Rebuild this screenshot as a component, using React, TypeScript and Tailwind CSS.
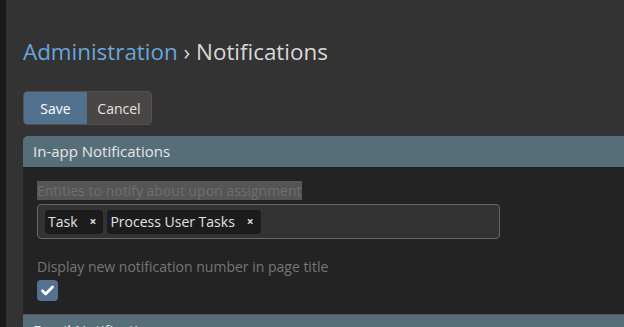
import React, { useState } from 'react';

const App = () => {
  const [tags, setTags] = useState(['Task', 'Process User Tasks']);
  const [showCount, setShowCount] = useState(true);

  return (
    <div className="flex h-[327px] w-[624px] overflow-hidden bg-[#333333] font-['Open_Sans',sans-serif]">
      {/* side bar edge */}
      <div className="w-[6px] shrink-0 bg-[#191919]" />

      <div className="flex min-w-0 flex-1 flex-col pl-[17px]">
        <h1 className="mt-[36px] shrink-0 text-[22.4px] leading-[32px] whitespace-nowrap">
          <span className="text-[#6aa5db]">Administration</span>
          <span className="text-[#d8d8d8]"> › Notifications</span>
        </h1>

        <div className="mt-[23px] flex w-fit shrink-0 overflow-hidden rounded-[4px] border border-[#555151] text-[14px]">
          <button className="h-[32px] w-[63px] bg-[#52718f] text-white">Save</button>
          <button className="h-[32px] w-[64px] bg-[#4a4645] text-[#e4e4e4]">Cancel</button>
        </div>

        <div className="mt-[11px] -mr-[20px] flex shrink-0 flex-col">
          <div className="h-[31px] rounded-tl-[5px] bg-[#566e7a] pl-[10px] text-[15px] leading-[31px] text-[#e6e6e6]">
            In-app Notifications
          </div>

          <div className="h-[147px] bg-[#232323] pl-[14px] pt-[13px] text-[14px] text-[#767676]">
            <span className="bg-[#555555] leading-[20px] text-[#6e6e6e]">Entities to notify about upon assignment</span>

            <div className="mt-[3px] flex h-[35px] w-[463px] items-center gap-[4px] rounded-[4px] border border-[#666666] bg-[#333333] pl-[7px]">
              {tags.map((tag) => (
                <span key={tag} className="flex h-[24px] items-center rounded-[4px] bg-[#1c1c1c] pl-[3px] pr-[7px] text-[14px] text-[#e2e2e2]">
                  {tag}
                  <button
                    onClick={() => setTags(tags.filter((t) => t !== tag))}
                    className="ml-[12px] text-[12px] font-bold text-[#dddddd]"
                  >
                    ×
                  </button>
                </span>
              ))}
            </div>

            <div className="mt-[18px] leading-[20px]">Display new notification number in page title</div>

            <button
              onClick={() => setShowCount(!showCount)}
              className="mt-[3px] flex h-[21px] w-[21px] items-center justify-center rounded-[4px] bg-[#567090]"
            >
              {showCount && (
                <svg viewBox="0 0 24 24" className="h-[15px] w-[15px]" fill="none" stroke="white" strokeWidth={4.5} strokeLinecap="round" strokeLinejoin="round">
                  <path d="M4 12.5l5 5L20 6.5" />
                </svg>
              )}
            </button>
          </div>

          <div className="h-[1px] bg-[#5a5550]" />
          <div className="h-[31px] bg-[#566e7a] pl-[10px] text-[15px] leading-[31px] text-[#e6e6e6]">
            Email Notifications
          </div>
        </div>
      </div>
    </div>
  );
};

export default App;
